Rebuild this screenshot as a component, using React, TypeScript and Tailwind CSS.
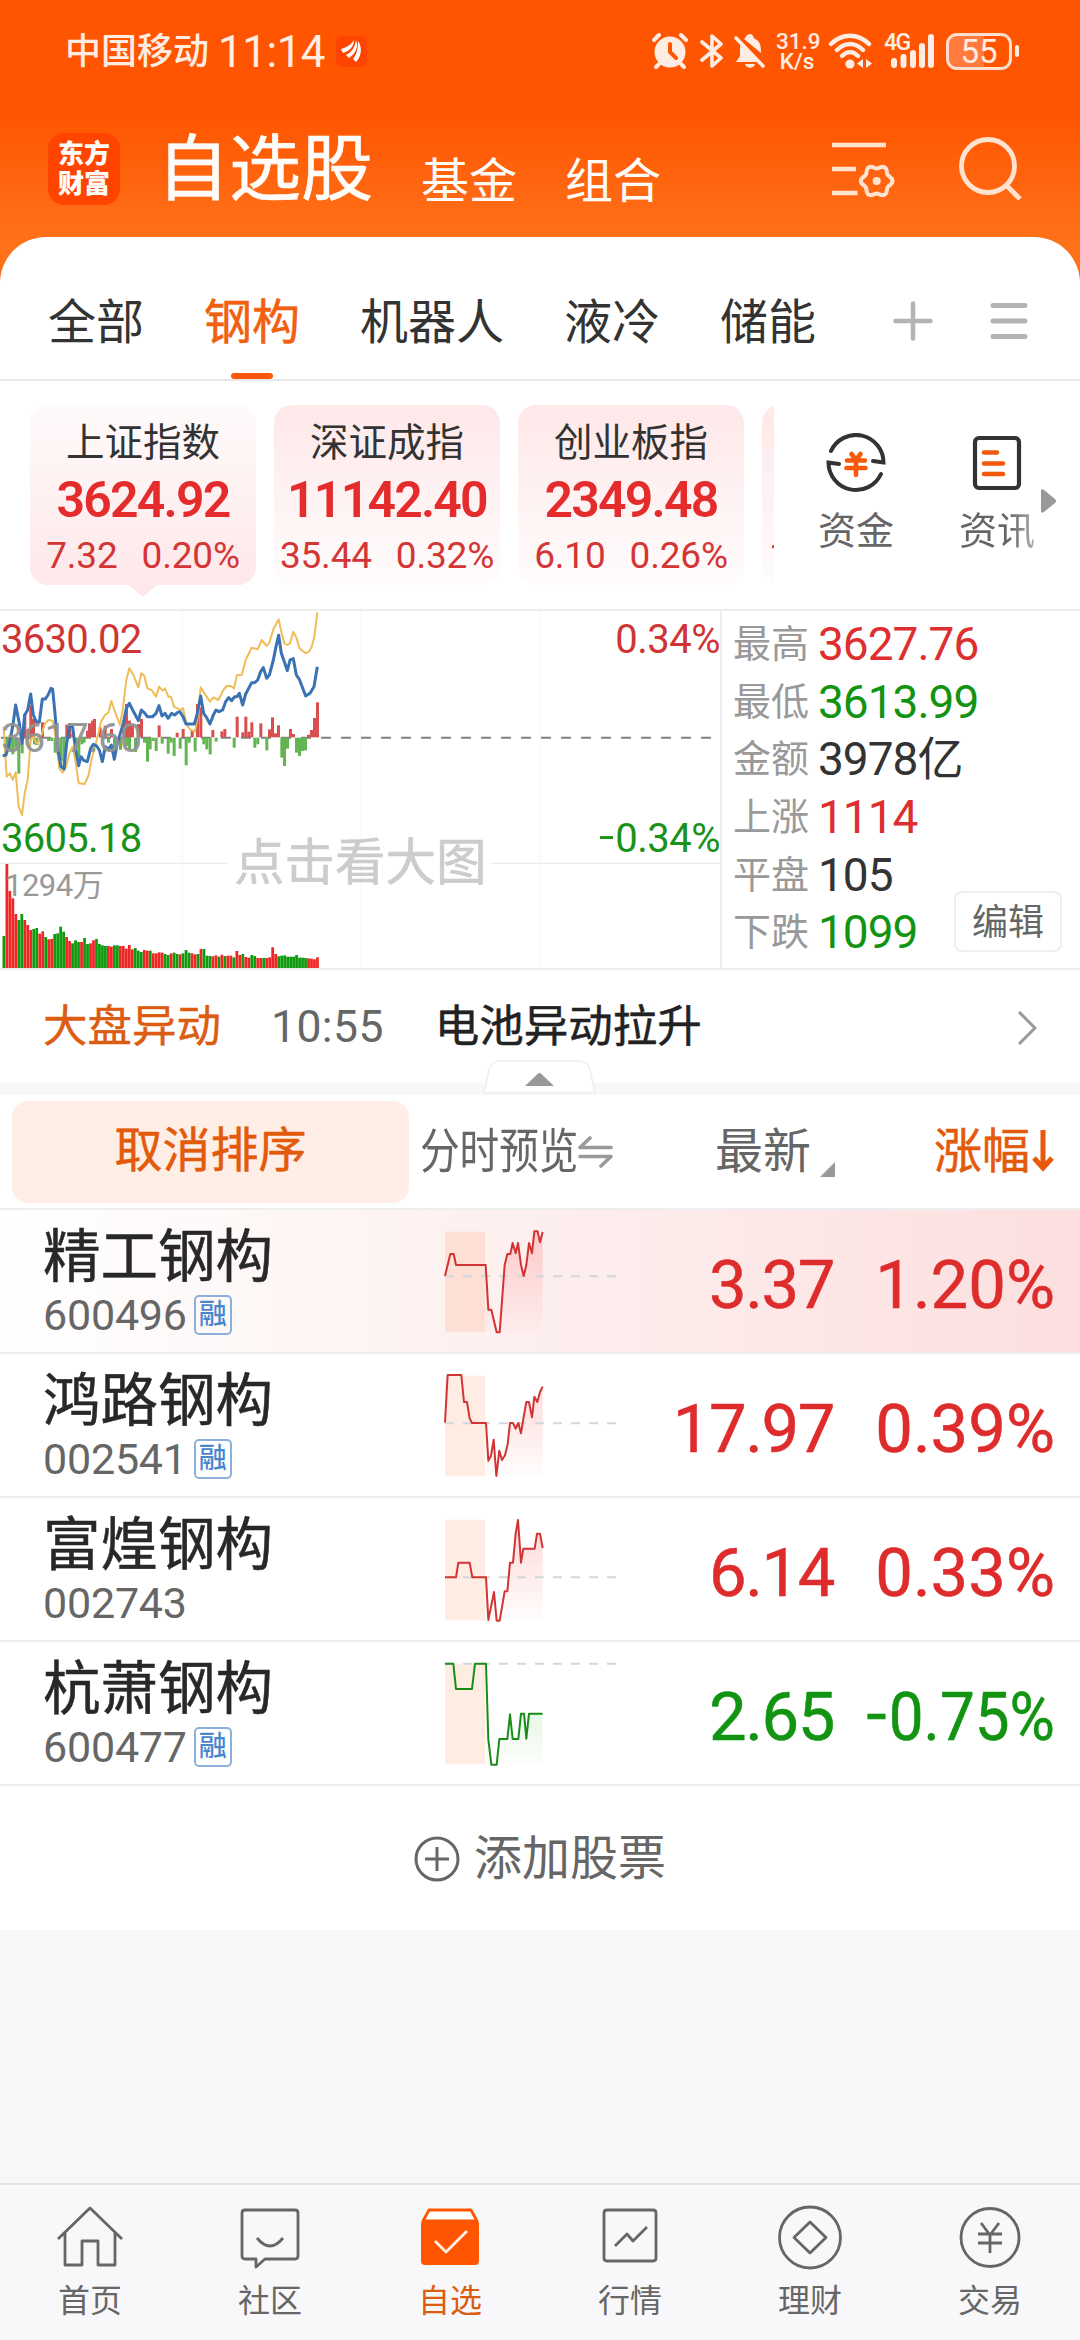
import React from 'react';

type Point = [number, number];

interface IndexType {
  name: string;
  value: string;
  change: string;
  percent: string;
  active?: boolean;
}

interface StockType {
  name: string;
  code: string;
  margin: boolean;
  price: string;
  percent: string;
  up: boolean;
  base: number;
  line: Point[];
}

const tabs = ['全部', '钢构', '机器人', '液冷', '储能'];

const indexes: IndexType[] = [
  { name: '上证指数', value: '3624.92', change: '7.32', percent: '0.20%', active: true },
  { name: '深证成指', value: '11142.40', change: '35.44', percent: '0.32%' },
  { name: '创业板指', value: '2349.48', change: '6.10', percent: '0.26%' },
];

const stats = [
  { label: '最高', value: '3627.76', color: 'text-[#dd2f2f]' },
  { label: '最低', value: '3613.99', color: 'text-[#129412]' },
  { label: '金额', value: '3978亿', color: 'text-[#333333]' },
  { label: '上涨', value: '1114', color: 'text-[#dd2f2f]' },
  { label: '平盘', value: '105', color: 'text-[#333333]' },
  { label: '下跌', value: '1099', color: 'text-[#129412]' },
];

// Sparkline points are in thirds of a pixel, from the top of the row
const stocks: StockType[] = [
  {
    name: '精工钢构', code: '600496', margin: true, price: '3.37', percent: '1.20%', up: true, base: 199,
    line: [[0, 198], [16, 132], [26, 132], [33, 165], [122, 165], [130, 299], [139, 299], [155, 367], [164, 367], [179, 165], [187, 132], [196, 132], [203, 99], [212, 130], [219, 99], [228, 165], [236, 198], [244, 165], [252, 99], [261, 130], [268, 64], [278, 64], [285, 97], [293, 66]],
  },
  {
    name: '鸿路钢构', code: '002541', margin: true, price: '17.97', percent: '0.39%', up: true, base: 208,
    line: [[0, 206], [8, 63], [49, 63], [57, 144], [66, 144], [74, 193], [81, 207], [123, 207], [130, 320], [138, 305], [146, 257], [154, 366], [163, 290], [171, 318], [180, 304], [188, 270], [195, 207], [204, 207], [212, 224], [220, 207], [228, 238], [236, 189], [244, 144], [252, 144], [261, 190], [268, 128], [277, 144], [285, 114], [293, 98]],
  },
  {
    name: '富煌钢构', code: '002743', margin: false, price: '6.14', percent: '0.33%', up: true, base: 238,
    line: [[0, 238], [33, 238], [40, 194], [74, 194], [82, 238], [123, 238], [130, 366], [147, 282], [155, 368], [164, 368], [179, 280], [187, 280], [195, 194], [204, 194], [212, 107], [219, 66], [228, 194], [235, 152], [269, 152], [276, 107], [285, 107], [293, 150]],
  },
  {
    name: '杭萧钢构', code: '600477', margin: true, price: '2.65', percent: '-0.75%', up: false, base: 65,
    line: [[0, 65], [25, 65], [33, 141], [81, 141], [90, 65], [123, 65], [130, 292], [139, 368], [155, 368], [163, 291], [187, 291], [195, 217], [203, 291], [220, 291], [228, 215], [237, 215], [244, 290], [252, 215], [293, 215]],
  },
];

const priceLine = '8,467 18,465 28,430 38,380 47,315 58,370 66,430 74,345 83,330 92,282 100,345 110,367 118,366 127,297 136,297 144,285 153,265 158,268 165,340 174,450 183,500 192,507 200,430 210,375 218,382 227,450 236,497 243,470 252,482 262,485 272,445 280,433 290,438 298,450 307,485 316,440 325,448 334,435 343,478 352,430 361,400 370,370 379,325 388,310 398,330 406,345 415,362 424,330 433,338 442,350 458,350 468,340 477,317 486,348 495,340 504,355 515,340 524,345 532,338 540,335 549,350 558,372 583,372 592,340 602,288 611,340 620,353 630,372 640,345 648,330 657,335 668,330 677,305 686,293 695,302 704,290 711,290 718,280 728,315 737,282 755,248 764,248 773,240 782,215 790,203 800,235 808,225 820,180 828,140 836,106 844,160 853,185 862,212 870,180 880,176 889,225 898,238 907,262 917,288 930,280 942,260 952,200';
const leadLine = '11,380 20,530 30,520 38,540 47,517 56,620 66,645 74,580 83,540 92,420 100,410 110,430 120,420 135,370 145,360 158,362 168,420 178,505 188,518 198,500 208,460 218,440 226,480 236,550 254,552 266,525 274,480 285,440 295,400 303,365 315,345 325,338 334,303 345,335 360,375 368,330 379,240 388,205 400,225 406,240 415,262 424,220 433,228 442,265 455,270 468,290 477,260 488,272 495,265 505,290 513,290 522,320 540,330 549,325 560,375 570,388 585,395 595,340 602,262 612,278 630,305 640,292 655,300 670,270 680,258 692,258 702,265 711,225 725,225 737,180 755,143 773,148 785,120 800,138 808,128 820,88 836,58 845,100 853,130 862,135 870,130 880,95 890,115 898,145 917,160 927,155 935,140 943,110 952,37';

const buyBars: Point[] = [[74, 70], [83, 25], [92, 95], [100, 55], [127, 45], [200, 38], [209, 35], [218, 10], [262, 20], [268, 42], [277, 50], [283, 55], [300, 30], [315, 35], [334, 25], [370, 40], [379, 100], [388, 50], [397, 40], [415, 40], [424, 55], [477, 36], [531, 14], [549, 25], [576, 20], [592, 100], [602, 90], [638, 22], [665, 18], [674, 25], [711, 62], [728, 15], [737, 62], [746, 17], [755, 45], [782, 42], [808, 24], [817, 60], [826, 12], [835, 36], [871, 25], [880, 10], [925, 8], [934, 22], [943, 58], [952, 105]];
const sellBars: Point[] = [[20, 35], [29, 35], [38, 50], [47, 30], [56, 108], [66, 47], [103, 20], [110, 22], [145, 10], [155, 10], [165, 45], [174, 50], [183, 70], [192, 90], [227, 50], [236, 60], [245, 20], [252, 15], [325, 15], [343, 40], [352, 20], [361, 36], [379, 25], [388, 35], [406, 43], [433, 15], [442, 72], [450, 35], [459, 10], [468, 40], [486, 18], [504, 48], [513, 15], [522, 55], [540, 33], [558, 83], [567, 15], [585, 42], [611, 20], [620, 35], [630, 50], [648, 12], [702, 30], [764, 30], [773, 20], [800, 38], [845, 60], [853, 85], [862, 33], [889, 45], [898, 55], [907, 40], [916, 38]];
const volumes = 'g96 r312 r231 r209 r162 g144 g162 r144 r129 r114 g117 g120 r103 r110 g93 r86 r87 g102 g104 g124 g109 r93 r81 g74 g83 g78 r78 g90 g72 r74 r83 g87 g72 g68 g66 r66 r64 g68 g68 r66 r66 r58 r69 r56 g60 g52 g48 r54 r52 g52 r44 r44 r47 r46 g42 g39 r44 g46 g42 r41 g44 g54 g46 r44 r41 g42 r57 g57 g37 g36 r35 r38 g34 r40 g36 r37 r37 g32 r51 r39 g42 r33 r31 g39 g36 r30 r30 g30 r30 r32 r62 r42 g35 g37 g38 g34 g34 g34 g39 g31 g31 g30 r29 r28 r26 r32'.split(' ');

// Six-lobed outline of the settings gear
const gearPoints = Array.from({ length: 72 }, (_, i) => {
  const angle = (i * Math.PI) / 36;
  const r = 14.2 + 1.6 * Math.cos(angle * 6);
  return `${(44.7 + r * Math.cos(angle)).toFixed(2)},${(41 + r * Math.sin(angle)).toFixed(2)}`;
}).join(' ');

const StatusBar: React.FC = () => (
  <div className="flex h-[102px] items-center pl-[65px] pr-[61px] text-[#ffece2]">
    <span className="pt-[2px] text-[36px] font-medium leading-none">中国移动</span>
    <span className="ml-[9px] pt-[2px] text-[44px] leading-none tracking-[-0.500px]">11:14</span>
    <span className="ml-[11px] flex h-[31px] w-[31px] items-center justify-center rounded-[6px] bg-[#ff4400]">
      <svg width="21" height="22" viewBox="0 0 21 22" fill="#fff">
        <path d="M0 9C6 7 10 5 13 0C13 6 9 11 2 13Z" />
        <path d="M5 15C11 12 14 7 15 0C18 7 14 14 8 18Z" />
        <path d="M12 19C16 14 17 8 17 1C22 8 20 17 15 22Z" />
      </svg>
    </span>
    <div className="ml-auto flex items-center">
      <svg width="36" height="36" viewBox="0 0 36 36" fill="none" stroke="currentColor" strokeLinecap="round">
        <circle cx="18" cy="19" r="15.5" fill="currentColor" stroke="none" />
        <path d="M2 7l5-5M34 7l-5-5M7 31l-3 3M29 31l3 3" strokeWidth="4" />
        <path d="M18 11v8l6 6" stroke="#ff5500" strokeWidth="4" />
      </svg>
      <svg className="ml-[12px]" width="24" height="36" viewBox="0 0 24 36" fill="none" stroke="currentColor" strokeWidth="3.6" strokeLinecap="round" strokeLinejoin="round">
        <path d="M2 9l19 16-9 8V3l9 8L2 27" />
      </svg>
      <svg className="ml-[10px]" width="31" height="36" viewBox="0 0 31 36" fill="currentColor">
        <path d="M6 12L25 29H2L6 23Z" />
        <path d="M10 6C12 5 12 1 16 1C19 1 19 4 21 6C26 8 27 12 27 20Z" />
        <path d="M11 31h10c-1 5-9 5-10 0Z" />
        <path d="M2 5L29 33" stroke="currentColor" strokeWidth="3.6" strokeLinecap="round" />
      </svg>
      <div className="ml-[11px] w-[42px] text-center text-[22.500px] font-medium leading-[20px]">
        <p>31.9</p>
        <p>K/s</p>
      </div>
      <svg className="ml-[10px]" width="45" height="36" viewBox="0 0 45 36" fill="none" stroke="currentColor" strokeWidth="4.4" strokeLinecap="round">
        <path d="M3 11C14 0 30 0 41 11M9 17C17 9 27 9 35 17M14 23C19 18 25 18 30 23" />
        <circle cx="22" cy="31" r="4.6" fill="currentColor" stroke="none" />
        <path d="M35 26v9l-6-4.500ZM38 26v9l6-4.500Z" fill="currentColor" stroke="none" />
      </svg>
      <div className="relative ml-[11px]">
        <svg width="51" height="36" viewBox="0 0 51 36" stroke="currentColor" strokeWidth="6" strokeLinecap="round">
          <path d="M10 28v4M19.500 24v8M29 20v12M38 13v19M47 4v28" />
        </svg>
        <span className="absolute left-0 top-0 text-[23px] font-medium leading-[20px] tracking-[-1.500px]">4G</span>
      </div>
      <div className="ml-[11px] flex h-[37px] w-[66px] items-center justify-center rounded-[11px] border-[3px] border-[#ffe0d0] bg-linear-to-r from-[#ff7a3c] from-58% to-[#ff5500] to-58% text-[33px] leading-none">
        55
      </div>
      <span className="ml-[3px] h-[12px] w-[4px] rounded-[2px] bg-[#ffece2]" />
    </div>
  </div>
);

const TopNav: React.FC = () => (
  <div className="flex h-[135px] items-start px-[48px] text-[#fffdfa]">
    <div className="mt-[31px] flex h-[72px] w-[72px] flex-col items-center justify-center rounded-[16px] bg-[#ff4400] text-[26px] font-black leading-[30px]">
      <span>东方</span>
      <span>财富</span>
    </div>
    <h1 className="ml-[37px] mt-[32px] w-[216px] text-[72px] leading-[72px] [-webkit-text-stroke:0.6px_#fffdfa]">自选股</h1>
    <span className="ml-[48px] mt-[56px] text-[48px] leading-[48px]">基金</span>
    <span className="ml-[48px] mt-[56px] text-[48px] leading-[48px]">组合</span>
    <svg className="ml-auto mt-[38px]" width="64" height="64" viewBox="0 0 64 64" fill="none" stroke="#ffe3cf" strokeWidth="4.600">
      <path d="M0 5h54M0 29h24M0 53h25.500" />
      <polygon points={gearPoints} strokeLinejoin="round" strokeWidth="4" />
      <circle cx="44.700" cy="41" r="4" fill="#ffe3cf" stroke="none" />
    </svg>
    <svg className="ml-[63px] mr-[10px] mt-[34px]" width="63" height="64" viewBox="0 0 63 64" fill="none" stroke="#ffe3cf" strokeWidth="4.800">
      <circle cx="29" cy="30" r="26.500" />
      <path d="M47 49l14 14" />
    </svg>
  </div>
);

const Tabs: React.FC = () => (
  <div className="flex h-[144px] items-center border-b-2 border-[#e8e8e8] pl-[48px] pr-[52px]">
    <div className="flex h-full gap-[60px] text-[48px] text-[#333333]">
      {tabs.map((tab) => (
        <div key={tab} className="relative flex h-full items-center pt-[29px]">
          <span className={tab === '钢构' ? 'text-[#f0600f] [-webkit-text-stroke:0.5px_#f0600f]' : ''}>{tab}</span>
          {tab === '钢构' && <span className="absolute bottom-0 left-[27px] h-[6px] w-[42px] rounded-[3px] bg-[#f9560a]" />}
        </div>
      ))}
    </div>
    <svg className="ml-auto mt-[25px]" width="40" height="40" viewBox="0 0 40 40" stroke="#b3b3b3" strokeWidth="4.500" strokeLinecap="round">
      <path d="M2.500 20h35M20 2.500v35" />
    </svg>
    <svg className="ml-[57px] mt-[25px]" width="38" height="40" viewBox="0 0 38 40" stroke="#b3b3b3" strokeWidth="5" strokeLinecap="round">
      <path d="M3 4.500h32M3 20h32M3 35.500h32" />
    </svg>
  </div>
);

const IndexCard: React.FC<{ item: IndexType }> = ({ item }) => (
  <div
    className={
      item.active
        ? 'relative h-[180px] w-[226px] shrink-0 rounded-[18px] bg-linear-to-b from-[#fffafa] to-[#fee8ea] text-center'
        : 'relative h-[180px] w-[226px] shrink-0 rounded-[18px] bg-linear-to-b from-[#fee8e9] to-[#fffcfc] text-center'
    }
  >
    <p className="pt-[15px] text-[38.500px] leading-[46px] text-[#333333]">{item.name}</p>
    <p className="mt-[9px] text-[50px] font-semibold leading-[50px] tracking-[-1.800px] text-[#e42c2c]">{item.value}</p>
    <p className="mt-[11px] flex justify-center gap-[24px] text-[37px] leading-[40px] tracking-[-0.200px] text-[#d43535]">
      <span>{item.change}</span>
      <span>{item.percent}</span>
    </p>
    {item.active && (
      <svg className="absolute left-[99px] top-[180px]" width="28" height="12" viewBox="0 0 28 12" fill="#fee8ea">
        <path d="M0 0H28L14 12Z" />
      </svg>
    )}
  </div>
);

const IndexStrip: React.FC = () => (
  <div className="flex h-[230px] border-b-2 border-[#eeeeee] pt-[24px]">
    <div className="flex w-[774px] gap-[18px] overflow-hidden pl-[30px]">
      {indexes.map((item) => (
        <IndexCard key={item.name} item={item} />
      ))}
      <div className="h-[180px] w-[226px] shrink-0 rounded-[18px] bg-linear-to-b from-[#fee8e9] to-[#fffcfc] pl-[7px] pt-[131px] text-[37px] leading-[40px] text-[#d43535]">
        1
      </div>
    </div>
    <div className="flex text-[38px] leading-[44px] text-[#666666]">
      <div className="flex w-[164px] flex-col items-center pt-[28px]">
        <svg width="60" height="60" viewBox="0 0 60 60" fill="none" stroke="#333" strokeWidth="4" strokeLinecap="round">
          <path d="M5 18A27.500 27.500 0 0 1 57.500 29.500L47 28" />
          <path d="M55 41A27.500 27.500 0 0 1 2.500 29.500L13 31" />
          <path d="M25.500 21l4.500 6 4.500-6M21 27.500h18M20.500 35h19M30 27v15" stroke="#f4590d" strokeWidth="4.600" />
        </svg>
        <span className="mt-[16px]">资金</span>
      </div>
      <div className="flex w-[118px] flex-col items-center pt-[28px]">
        <svg width="60" height="60" viewBox="0 0 60 60" fill="none" stroke="#333" strokeWidth="4.200" strokeLinecap="round">
          <rect x="8" y="5" width="44" height="50" rx="4" />
          <path d="M17 19.500h13M17 30.500h19M17 41h19" stroke="#f4590d" strokeWidth="4.600" />
        </svg>
        <span className="mt-[16px] bg-linear-to-r from-[#666666] from-65% to-[#b0b0b0] bg-clip-text text-transparent">资讯</span>
      </div>
    </div>
    <svg className="-ml-[15px] mt-[84px]" width="16" height="24" viewBox="0 0 16 24" fill="#999">
      <path d="M0 2Q0-1 3 1L14 10Q16 12 14 14L3 23Q0 25 0 22Z" />
    </svg>
  </div>
);

const MarketChart: React.FC = () => (
  <div className="relative h-[357px] w-[720px] text-[40px] leading-[40px]">
    <svg className="block" width="720" height="357" viewBox="0 33 2160 1071" fill="none">
      <path d="M547 33V1104M1083 33V1104M1621 33V1104" stroke="#e2e2e2" strokeWidth="3" strokeDasharray="3 5" />
      <path d="M0 790H682M1472 790H2160" stroke="#ececec" strokeWidth="4" />
      <path d="M3 413H2140" stroke="#808080" strokeWidth="6" strokeDasharray="30 30" />
      {buyBars.map(([x, h]) => (
        <rect key={x} x={x - 4} y={412 - h} width="9" height={h} fill="#d94f4f" />
      ))}
      {sellBars.map(([x, h]) => (
        <rect key={x} x={x - 4} y="413" width="9" height={h} fill="#63b553" />
      ))}
      {volumes.map((v, i) => {
        const h = Number(v.slice(1));
        return <rect key={i} x={7.5 + i * 8.96} y={1104 - h} width="8.300" height={h} fill={v[0] === 'r' ? '#ee2626' : '#109a10'} />;
      })}
      <polyline points={leadLine} stroke="#efbd58" strokeWidth="6" strokeLinejoin="round" />
      <polyline points={priceLine} stroke="#3a72b4" strokeWidth="9" strokeLinejoin="round" />
    </svg>
    <span className="absolute left-[1px] top-[9px] tracking-[-0.700px] text-[#cf3535]">3630.02</span>
    <span className="absolute left-[1px] top-[108px] tracking-[-0.700px] text-[#929292]/95">3617.60</span>
    <span className="absolute left-[1px] top-[208px] tracking-[-0.700px] text-[#1a921a]">3605.18</span>
    <span className="absolute right-0 top-[9px] tracking-[-0.500px] text-[#cf3535]">0.34%</span>
    <span className="absolute right-0 top-[208px] tracking-[-0.500px] text-[#1a921a]">
      <span className="inline-block origin-right scale-x-80">−</span>0.34%
    </span>
    <span className="absolute left-[5px] top-[255px] text-[31px] tracking-[-0.500px] text-[#999999]">1294万</span>
    <span className="absolute left-[234px] top-[227px] text-[50.500px] leading-[50px] text-[#cccccc] [-webkit-text-stroke:0.6px_#cccccc]">点击看大图</span>
  </div>
);

const MarketStats: React.FC = () => (
  <div className="relative flex flex-1 flex-col border-l-2 border-[#eeeeee] pl-[11px] pt-[5px]">
    {stats.map((item) => (
      <div key={item.label} className="flex h-[57.600px] items-center">
        <span className="w-[85px] text-[38px] text-[#999999]">{item.label}</span>
        <span className={`text-[46px] tracking-[-1px] ${item.color}`}>{item.value}</span>
      </div>
    ))}
    <button className="absolute bottom-[16px] right-[18px] h-[61px] w-[108px] rounded-[8px] border-2 border-[#efefef] bg-white pt-[2px] text-[36px] text-[#666666]">
      编辑
    </button>
  </div>
);

const NewsRow: React.FC = () => (
  <div className="relative h-[125px] border-b-12 border-[#f6f8fa]">
    <div className="flex h-full items-center pl-[43px] pr-[43px] pt-[2px] text-[44.500px]">
      <span className="text-[#dc5c12] [-webkit-text-stroke:0.4px_#dc5c12]">大盘异动</span>
      <span className="ml-[50px] tracking-[0.400px] text-[#666666]">10:55</span>
      <span className="ml-[51px] text-[#222222] [-webkit-text-stroke:0.5px_#222222]">电池异动拉升</span>
      <svg className="ml-auto" width="20" height="34" viewBox="0 0 20 34" fill="none" stroke="#999" strokeWidth="3">
        <path d="M2 1l16 16L2 33" />
      </svg>
    </div>
    <svg className="absolute left-[483px] top-[90px]" width="113" height="34" viewBox="0 0 113 34">
      <path d="M1 33L6 10Q8 1 18 1H95Q105 1 107 10L112 33Z" fill="#fff" stroke="#f1f1f1" strokeWidth="2" />
      <path d="M42 26L54.500 14Q56.500 12 58.500 14L71 26Z" fill="#999" />
    </svg>
  </div>
);

const TableHeader: React.FC = () => (
  <div className="flex h-[115px] items-center border-b-2 border-[#eeeeee] pl-[12px] pr-[26px] text-[48px] text-[#666666]">
    <button className="h-[102px] w-[397px] rounded-[16px] bg-[#feeee6] pb-[2px] text-[#e35a0c] [-webkit-text-stroke:0.5px_#e35a0c]">取消排序</button>
    <div className="ml-[11px] flex w-[194px] items-center">
      <span className="w-[158px] origin-left scale-x-[0.825] whitespace-nowrap">分时预览</span>
      <svg className="shrink-0" width="35" height="32" viewBox="0 0 35 32" fill="none" stroke="#999" strokeWidth="3.600" strokeLinecap="round" strokeLinejoin="round">
        <path d="M12 2L2 11.500H33M2 20.500H33L23 30" />
      </svg>
    </div>
    <span className="ml-[101px] whitespace-nowrap">最新</span>
    <svg className="ml-[9px] mt-[36px] shrink-0" width="15" height="15" viewBox="0 0 15 15" fill="#999">
      <path d="M15 0V15H0Z" />
    </svg>
    <span className="ml-auto whitespace-nowrap text-[#e35a0c] [-webkit-text-stroke:0.5px_#e35a0c]">涨幅</span>
    <svg className="mb-[2px] ml-[2px] shrink-0" width="22" height="42" viewBox="0 0 22 42" fill="none" stroke="#e8590a" strokeWidth="5">
      <path d="M11 0V37M2 28l9 10 9-10" />
    </svg>
  </div>
);

const Sparkline: React.FC<{ stock: StockType; id: string }> = ({ stock, id }) => {
  const color = stock.up ? '#d23434' : '#198c19';
  const recent = stock.line.filter(([x]) => x > 121);

  return (
    <svg width="174" height="143" viewBox="-3 0 522 429" fill="none">
      <defs>
        <linearGradient id={id} x1="0" y1="60" x2="0" y2="367" gradientUnits="userSpaceOnUse">
          <stop offset="0" stopColor={stock.up ? '#ff3030' : '#20b020'} stopOpacity="0.2" />
          <stop offset="1" stopColor={stock.up ? '#ff3030' : '#20b020'} stopOpacity="0.01" />
        </linearGradient>
      </defs>
      <rect x="0" y="65" width="120" height="302" fill="#ff6a28" fillOpacity="0.130" />
      <polygon points={`122,367 ${recent.join(' ')} 293,367`} fill={`url(#${id})`} />
      <path d={`M0 ${stock.base}H514`} stroke="#d3d6da" strokeWidth="6" strokeDasharray="27 27" />
      <polyline points={stock.line.join(' ')} stroke={color} strokeWidth="6" strokeLinejoin="round" />
    </svg>
  );
};

const StockRow: React.FC<{ stock: StockType; first: boolean }> = ({ stock, first }) => (
  <div
    className={`flex h-[144px] items-center border-b-2 border-[#eeeeee] pl-[43px] pr-[25px] ${
      first ? 'bg-linear-to-r from-white via-[#fdefee] to-[#fcdfdf]' : ''
    }`}
  >
    <div className="w-[401px]">
      <p className="mt-[4px] text-[57.500px] leading-[60px] text-[#282828] [-webkit-text-stroke:0.5px_#282828]">{stock.name}</p>
      <div className="mt-[4px] flex h-[46px] items-center text-[43px] leading-[46px] text-[#666666]">
        <span className="tracking-[-0.200px]">{stock.code}</span>
        {stock.margin && (
          <span className="ml-[7px] flex h-[40px] w-[38px] items-center justify-center rounded-[5px] border-2 border-[#8db0db] text-[28px] font-medium leading-none text-[#4a86cb]">
            融
          </span>
        )}
      </div>
    </div>
    <Sparkline stock={stock} id={`area-${stock.code}`} />
    <div
      className={`flex flex-1 items-center justify-end pt-[8px] text-[67px] [-webkit-text-stroke:0.5px_currentColor] ${
        stock.up ? 'text-[#de2c2c]' : 'text-[#129412]'
      }`}
    >
      <span className="tracking-[-1.400px]">{stock.price}</span>
      <span className={`w-[221px] whitespace-nowrap text-right ${stock.up ? '' : 'origin-right scale-x-[0.925]'}`}>
        {!stock.up && <span className="-ml-[20px] inline-block origin-right scale-x-70">−</span>}
        {stock.percent.replace('-', '')}
      </span>
    </div>
  </div>
);

const BottomNav: React.FC = () => {
  const items = [
    { label: '首页', icon: <path d="M1 34L33 3L65 34M8 28V60H25V36H41V60H58V28" /> },
    { label: '社区', icon: <path d="M8 5H58Q61 5 61 8V51Q61 54 58 54H28L19 62V54H8Q5 54 5 51V8Q5 5 8 5ZM20 33Q33 49 46 33" /> },
    {
      label: '自选',
      icon: (
        <>
          <path d="M12 5H54L60 16H6Z" stroke="#ff5500" fill="#fff" />
          <path d="M4 19Q4 15 8 15H58Q62 15 62 19V56Q62 60 58 60H8Q4 60 4 56Z" fill="#ff5500" stroke="none" />
          <path d="M18 36L29 47L50 26" stroke="#fff0e4" />
        </>
      ),
    },
    { label: '行情', icon: <path d="M10 5H56Q59 5 59 8V53Q59 56 56 56H10Q7 56 7 53V8Q7 5 10 5ZM18 41L30 29L36 36L50 22" /> },
    {
      label: '理财',
      icon: (
        <>
          <circle cx="33" cy="32.5" r="30.5" />
          <path d="M33 17L49 32.500L33 48L17 32.500Z" />
        </>
      ),
    },
    {
      label: '交易',
      icon: (
        <>
          <circle cx="33" cy="32.5" r="29" />
          <path d="M24 18L33 30L42 18M21 29H45M21 38H45M33 29V48" />
        </>
      ),
    },
  ];

  return (
    <div className="mt-auto flex h-[157px] border-t-2 border-[#e4e5e7] bg-[#f8f8fa]">
      {items.map((item) => (
        <div key={item.label} className="flex w-[180px] flex-col items-center pt-[20px]">
          <svg width="66" height="66" viewBox="0 0 66 66" fill="none" stroke="#666" strokeWidth="2.800" strokeLinejoin="round">
            {item.icon}
          </svg>
          <span className={item.label === '自选' ? 'mt-[10px] text-[32px] leading-[40px] text-[#dc5c12]' : 'mt-[10px] text-[32px] leading-[40px] text-[#666666]'}>
            {item.label}
          </span>
        </div>
      ))}
    </div>
  );
};

const App: React.FC = () => {
  return (
    <div className="flex h-[2340px] w-[1080px] flex-col overflow-hidden bg-[#f6f7f9] font-['Roboto','Noto_Sans_CJK_SC',sans-serif]">
      <div className="bg-linear-to-b from-[#ff5500] from-[115px] to-[#ff7119] to-[240px]">
        <StatusBar />
        <TopNav />
        <div className="rounded-t-[46px] bg-white">
          <Tabs />
        </div>
      </div>
      <div className="bg-white">
        <IndexStrip />
        <div className="flex border-b-2 border-[#eeeeee]">
          <MarketChart />
          <MarketStats />
        </div>
        <NewsRow />
        <TableHeader />
        {stocks.map((stock, i) => (
          <StockRow key={stock.code} stock={stock} first={i === 0} />
        ))}
        <div className="flex h-[144px] items-center justify-center gap-[14px] pt-px text-[48px] text-[#666666]">
          <svg width="46" height="46" viewBox="0 0 46 46" fill="none" stroke="#666" strokeWidth="3">
            <circle cx="23" cy="23" r="21" />
            <path d="M11 23h24M23 11v24" />
          </svg>
          <span>添加股票</span>
        </div>
      </div>
      <BottomNav />
    </div>
  );
};

export default App;
